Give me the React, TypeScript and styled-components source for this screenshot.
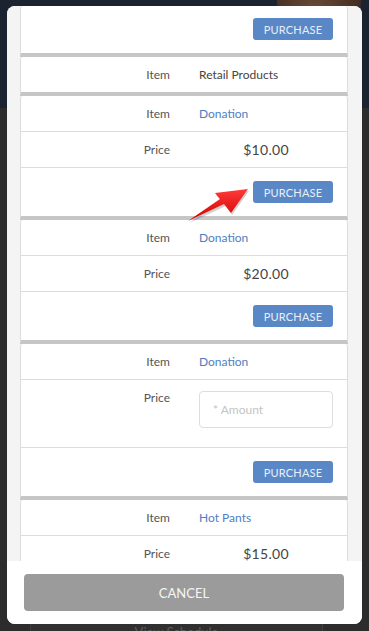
import React from "react";
import styled, { createGlobalStyle } from "styled-components";

const GlobalStyle = createGlobalStyle`
  html, body { margin: 0; padding: 0; }
  body { background: #353535; font-family: Lato, "Open Sans", sans-serif; }
  * { box-sizing: border-box; }
`;

const Page = styled.div`
  position: relative;
  width: 369px;
  height: 631px;
  overflow: hidden;
  display: flex;
  flex-direction: column;
  background: #353535;
`;

const Header = styled.div`
  height: 108px;
  background: #1b2230;
  display: flex;
  justify-content: flex-end;
  padding-right: 8px;
  overflow: hidden;
`;

const Avatar = styled.div`
  width: 84px;
  height: 84px;
  margin-top: -40px;
  border-radius: 50%;
  background: radial-gradient(circle at 45% 60%, #6b4a36 0%, #4a3125 55%, #2a2024 100%);
`;

const PageBody = styled.div`
  flex: 1;
  display: flex;
  flex-direction: column;
  justify-content: flex-end;
  padding: 0 46px 0 30px;
  background: #2c2c2c;
`;

const ScheduleBar = styled.div`
  height: 14px;
  margin-bottom: -6px;
  border: 1px solid #3f3f3f;
  background: #303030;
  color: #5a5a5a;
  font-size: 13px;
  text-align: center;
  line-height: 16px;
`;

const Modal = styled.div`
  position: absolute;
  top: 6px;
  left: 7px;
  width: 355px;
  height: 618px;
  background: #ffffff;
  border-radius: 8px;
  overflow: hidden;
  display: flex;
  flex-direction: column;
`;

const ScrollArea = styled.div`
  flex: 1;
  overflow: hidden;
  background: #f4f4f4;
  padding: 0 14px 0 13px;
`;

const Card = styled.div`
  background: #ffffff;
  border-left: 1px solid #dcdcdc;
  border-right: 1px solid #dcdcdc;
  border-bottom: 4px solid #c6c6c6;
  border-radius: 3px 3px 0 0;
`;

const Row = styled.div<{ $tall?: boolean }>`
  display: grid;
  grid-template-columns: 149px 1fr;
  column-gap: 29px;
  padding-right: 14px;
  min-height: 35px;
  align-items: ${(p) => (p.$tall ? "start" : "center")};
  border-bottom: 1px solid #dcdcdc;
  &:last-child { border-bottom: none; }
`;

const Label = styled.div`
  text-align: right;
  font-size: 12px;
  color: #555555;
  line-height: 35px;
`;

const Value = styled.div<{ $kind?: "text" | "link" | "price" }>`
  font-size: ${(p) => (p.$kind === "price" ? "14px" : "12px")};
  color: ${(p) => (p.$kind === "link" ? "#4e7ec1" : "#444444")};
  text-align: ${(p) => (p.$kind === "price" ? "center" : "left")};
  letter-spacing: ${(p) => (p.$kind === "price" ? "0.3px" : "0")};
`;

const AmountInput = styled.input`
  margin: 11px 0 19px;
  width: 100%;
  height: 37px;
  border: 1px solid #dddddd;
  border-radius: 4px;
  padding: 0 13px;
  font-family: Lato, "Open Sans", sans-serif;
  font-size: 12px;
  color: #444;
  outline: none;
  &::placeholder { color: #c4c4c4; }
`;

const ActionRow = styled.div<{ $top?: number }>`
  display: flex;
  justify-content: flex-end;
  padding: ${(p) => p.$top ?? 13}px 14px 13px;
`;

const PurchaseButton = styled.button`
  width: 80px;
  height: 22px;
  border: none;
  border-radius: 3px;
  background: #5a87c6;
  color: #e9eff8;
  font-family: Lato, "Open Sans", sans-serif;
  font-size: 11px;
  letter-spacing: 0.2px;
  padding: 0;
  cursor: pointer;
`;

const Footer = styled.div`
  padding: 13px 18px 13px 17px;
  background: #ffffff;
`;

const CancelButton = styled.button`
  width: 100%;
  height: 37px;
  border: none;
  border-radius: 4px;
  background: #9b9b9b;
  color: #f6f6f6;
  font-family: Lato, "Open Sans", sans-serif;
  font-size: 13px;
  padding: 0;
`;

const ArrowSvg = styled.svg`
  position: absolute;
  left: 185px;
  top: 183px;
  width: 70px;
  height: 44px;
  overflow: visible;
`;

const RedArrow = () => (
  <ArrowSvg viewBox="0 0 70 44">
    <defs>
      <linearGradient id="arrowFill" x1="0" y1="0" x2="0" y2="1">
        <stop offset="0" stopColor="#ff3a3a" />
        <stop offset="1" stopColor="#d10000" />
      </linearGradient>
    </defs>
    <polygon
      points="64,8 31,12 36,18 4,40 41,23 47,32"
      fill="#000"
      opacity="0.18"
    />
    <polygon points="63,6 30,10 35,16 3,38 39,21 46,30" fill="url(#arrowFill)" />
  </ArrowSvg>
);

type Item = {
  name: string;
  kind: "text" | "link";
  price?: string;
  amount?: boolean;
  purchase?: boolean;
};

const items: Item[] = [
  { name: "Retail Products", kind: "text" },
  { name: "Donation", kind: "link", price: "$10.00", purchase: true },
  { name: "Donation", kind: "link", price: "$20.00", purchase: true },
  { name: "Donation", kind: "link", amount: true, purchase: true },
  { name: "Hot Pants", kind: "link", price: "$15.00" },
];

export default function App() {
  return (
    <>
      <GlobalStyle />
      <Page>
        <Header>
          <Avatar />
        </Header>
        <PageBody>
          <ScheduleBar>View Schedule</ScheduleBar>
        </PageBody>
        <Modal>
          <ScrollArea>
            <Card>
              <ActionRow $top={12}>
                <PurchaseButton>PURCHASE</PurchaseButton>
              </ActionRow>
            </Card>
            {items.map((it, i) => (
              <Card key={i}>
                <Row>
                  <Label>Item</Label>
                  <Value $kind={it.kind}>{it.name}</Value>
                </Row>
                {it.price && (
                  <Row>
                    <Label>Price</Label>
                    <Value $kind="price">{it.price}</Value>
                  </Row>
                )}
                {it.amount && (
                  <Row $tall>
                    <Label>Price</Label>
                    <AmountInput placeholder="* Amount" />
                  </Row>
                )}
                {it.purchase && (
                  <ActionRow>
                    <PurchaseButton>PURCHASE</PurchaseButton>
                  </ActionRow>
                )}
              </Card>
            ))}
          </ScrollArea>
          <Footer>
            <CancelButton>CANCEL</CancelButton>
          </Footer>
        </Modal>
        <RedArrow />
      </Page>
    </>
  );
}
